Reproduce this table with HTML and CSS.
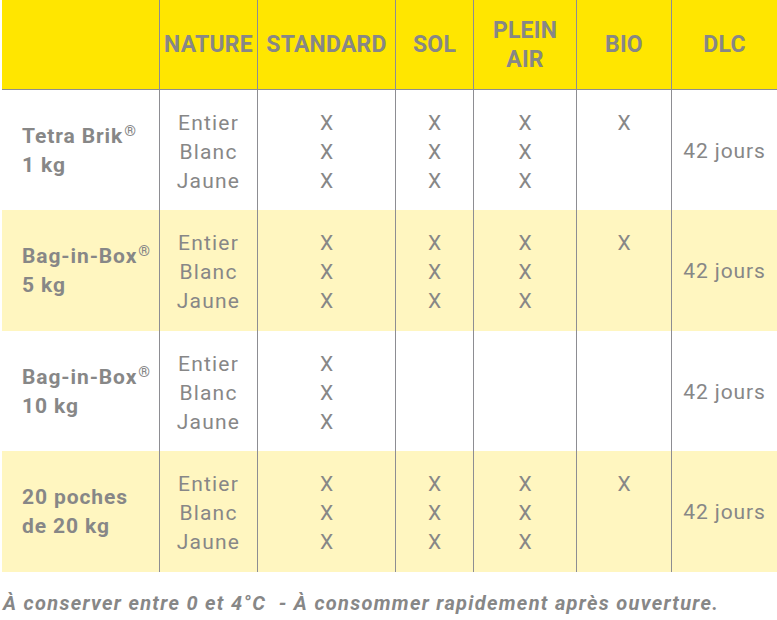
FILE: index.html
```html
<!DOCTYPE html>
<html lang="fr">
<head>
<meta charset="utf-8">
<title>Gamme œufs liquides</title>
<link rel="stylesheet" href="styles.css">
</head>
<body>
<div class="table">
  <div class="cell head first"></div>
  <div class="cell head"><span>NATURE</span></div>
  <div class="cell head"><span>STANDARD</span></div>
  <div class="cell head"><span>SOL</span></div>
  <div class="cell head"><span>PLEIN<br>AIR</span></div>
  <div class="cell head"><span>BIO</span></div>
  <div class="cell head"><span>DLC</span></div>

  <div class="cell label"><span>Tetra Brik<sup>®</sup><br>1 kg</span></div>
  <div class="cell"><span>Entier<br>Blanc<br>Jaune</span></div>
  <div class="cell mark"><span>X<br>X<br>X</span></div>
  <div class="cell mark"><span>X<br>X<br>X</span></div>
  <div class="cell mark"><span>X<br>X<br>X</span></div>
  <div class="cell mark"><span>X<br>&nbsp;<br>&nbsp;</span></div>
  <div class="cell dlc"><span>42 jours</span></div>

  <div class="cell label alt"><span>Bag-in-Box<sup>®</sup><br>5 kg</span></div>
  <div class="cell alt"><span>Entier<br>Blanc<br>Jaune</span></div>
  <div class="cell alt mark"><span>X<br>X<br>X</span></div>
  <div class="cell alt mark"><span>X<br>X<br>X</span></div>
  <div class="cell alt mark"><span>X<br>X<br>X</span></div>
  <div class="cell alt mark"><span>X<br>&nbsp;<br>&nbsp;</span></div>
  <div class="cell alt dlc"><span>42 jours</span></div>

  <div class="cell label"><span>Bag-in-Box<sup>®</sup><br>10 kg</span></div>
  <div class="cell"><span>Entier<br>Blanc<br>Jaune</span></div>
  <div class="cell mark"><span>X<br>X<br>X</span></div>
  <div class="cell"></div>
  <div class="cell"></div>
  <div class="cell"></div>
  <div class="cell dlc"><span>42 jours</span></div>

  <div class="cell label alt"><span>20 poches<br>de 20 kg</span></div>
  <div class="cell alt"><span>Entier<br>Blanc<br>Jaune</span></div>
  <div class="cell alt mark"><span>X<br>X<br>X</span></div>
  <div class="cell alt mark"><span>X<br>X<br>X</span></div>
  <div class="cell alt mark"><span>X<br>X<br>X</span></div>
  <div class="cell alt mark"><span>X<br>&nbsp;<br>&nbsp;</span></div>
  <div class="cell alt dlc"><span>42 jours</span></div>
</div>
<p class="note">À conserver entre 0 et 4°C&nbsp; - À consommer rapidement après ouverture.</p>
</body>
</html>
```
FILE: styles.css
```css
html, body {
  margin: 0;
  padding: 0;
  background: #ffffff;
}

body {
  font-family: Roboto, "Liberation Sans", sans-serif;
  color: #878787;
  width: 777px;
  height: 620px;
  overflow: hidden;
}

.table {
  margin-left: 2px;
  display: grid;
  grid-template-columns: 157px 98px 138px 78px 103px 95px 106px;
  grid-template-rows: 90px 120px 121px 120px 121px;
}

.cell {
  box-sizing: border-box;
  border-left: 1px solid #8d8d92;
  display: flex;
  align-items: center;
  justify-content: center;
  text-align: center;
  font-size: 21px;
  line-height: 29px;
  letter-spacing: 1.2px;
  padding-top: 4px;
}

.cell.first,
.cell.label {
  border-left: none;
}

.head {
  background: #ffe600;
  border-bottom: 1px solid #8d8d92;
  font-weight: 700;
  font-size: 23px;
  letter-spacing: 0.2px;
  line-height: 29px;
  padding-top: 0;
}

.alt {
  background: #fff6c0;
}

.label {
  justify-content: flex-start;
  text-align: left;
  padding-left: 20px;
  padding-top: 1px;
  font-weight: 700;
  letter-spacing: 0.9px;
}

.label sup {
  font-size: 15px;
  line-height: 0;
  vertical-align: 7px;
  letter-spacing: 0;
  margin-left: 1px;
}

.mark {
  letter-spacing: 0;
}

.dlc {
  letter-spacing: 0.9px;
  padding-top: 2px;
}

.note {
  margin: 19px 0 0 3px;
  font-size: 20px;
  font-weight: 700;
  font-style: italic;
  letter-spacing: 1.3px;
  line-height: 24px;
}
```
